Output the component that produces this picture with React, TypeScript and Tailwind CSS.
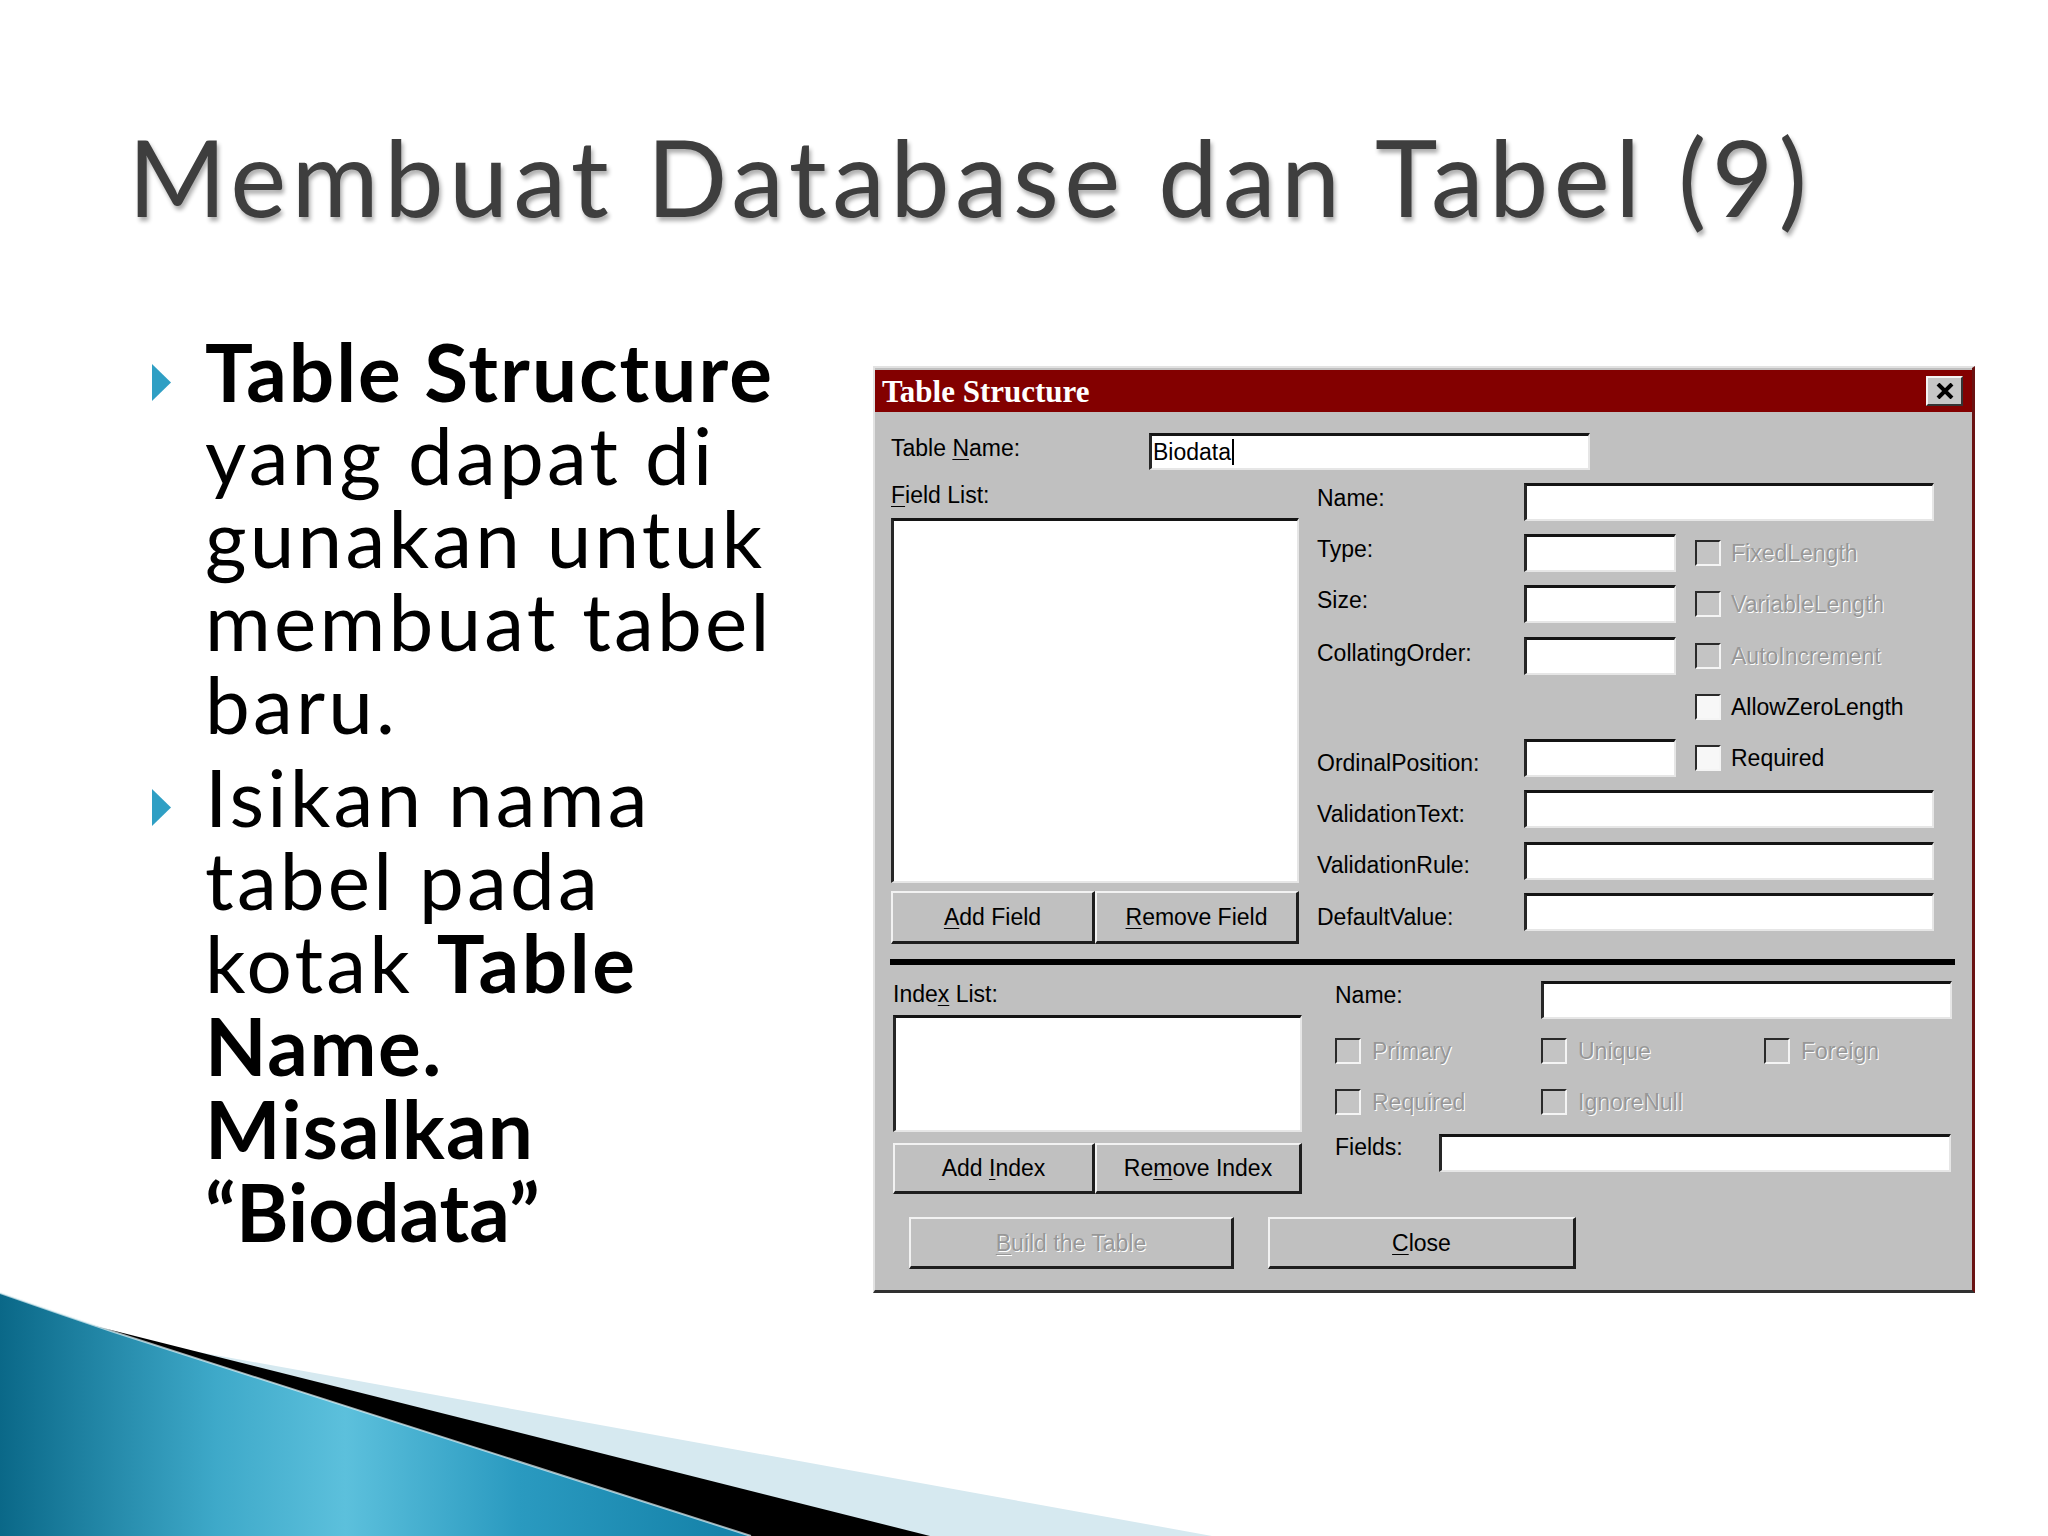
import React from "react";

const UI = "[font-family:'Liberation_Sans',Arial,sans-serif] text-[23px] leading-[26px] whitespace-nowrap";
const EN = "text-black";
const DIS = "text-[#979797] [text-shadow:1px_1px_0_#ffffff]";

function U({ children }: { children: React.ReactNode }) {
  return <span className="underline decoration-1 underline-offset-[3px]">{children}</span>;
}

function Sunken({ cls, children }: { cls: string; children?: React.ReactNode }) {
  return (
    <div
      className={
        "bg-white border-t-[3px] border-l-[3px] border-r-2 border-b-2 border-t-[#141414] border-l-[#262626] border-r-[#e6e6e6] border-b-[#e6e6e6] " +
        cls
      }
    >
      {children}
    </div>
  );
}

function Btn({ cls, children, disabled }: { cls: string; children: React.ReactNode; disabled?: boolean }) {
  return (
    <div
      className={
        "flex items-center justify-center bg-[#c0c0c0] border-t-2 border-l-2 border-t-[#f2f2f2] border-l-[#f2f2f2] border-r-[3px] border-b-[3px] border-r-[#1e1e1e] border-b-[#1e1e1e] " +
        UI +
        " " +
        (disabled ? DIS : EN) +
        " " +
        cls
      }
    >
      <span>{children}</span>
    </div>
  );
}

function Check({ label, disabled, gap }: { label: string; disabled?: boolean; gap: string }) {
  return (
    <div className={"flex items-center " + gap}>
      <div
        className={
          "w-[26px] h-[26px] shrink-0 border-t-2 border-l-2 border-r-2 border-b-2 border-t-[#2a2a2a] border-l-[#2a2a2a] border-r-[#f4f4f4] border-b-[#f4f4f4] " +
          (disabled ? "bg-[#c4c4c4]" : "bg-[#f7f7f7]")
        }
      />
      <span className={UI + " " + (disabled ? DIS : EN)}>{label}</span>
    </div>
  );
}

type Row = { label: string; input: "long" | "short" | "none"; check?: string; dis?: boolean; shift: string };

const upperRows: Row[] = [
  { label: "Name:", input: "long", shift: "-translate-y-[4px]" },
  { label: "Type:", input: "short", check: "FixedLength", dis: true, shift: "-translate-y-[4px]" },
  { label: "Size:", input: "short", check: "VariableLength", dis: true, shift: "-translate-y-[4px]" },
  { label: "CollatingOrder:", input: "short", check: "AutoIncrement", dis: true, shift: "-translate-y-[3px]" },
  { label: "", input: "none", check: "AllowZeroLength", shift: "" },
  { label: "OrdinalPosition:", input: "short", check: "Required", shift: "translate-y-[5px]" },
  { label: "ValidationText:", input: "long", shift: "translate-y-[5px]" },
  { label: "ValidationRule:", input: "long", shift: "translate-y-[4px]" },
  { label: "DefaultValue:", input: "long", shift: "translate-y-[5px]" },
];

function Dialog() {
  return (
    <div className="mt-[36.5px] w-[1102px] h-[927px] shrink-0 flex flex-col bg-[#c0c0c0] border-t-2 border-l-2 border-t-[#e2e2e2] border-l-[#e2e2e2] border-r-[3px] border-b-[3px] border-r-[#6a1212] border-b-[#303030]">
      {/* title bar */}
      <div className="mt-[2px] h-[42px] shrink-0 bg-[#830000] flex items-center justify-between pl-[7px] pr-[9px]">
        <span className="[font-family:'Liberation_Serif',serif] font-bold text-[31px] leading-[42px] text-white translate-y-[1px] whitespace-nowrap">
          Table Structure
        </span>
        <div className="w-[37px] h-[30px] flex items-center justify-center bg-[#c6c6c6] border-t-2 border-l-2 border-t-[#f4f4f4] border-l-[#f4f4f4] border-r-2 border-b-2 border-r-[#333] border-b-[#333]">
          <svg width="18" height="16" viewBox="0 0 18 16">
            <path d="M2 1 L16 15 M16 1 L2 15" stroke="#000" strokeWidth="4" />
          </svg>
        </div>
      </div>

      {/* body */}
      <div className="flex-1 flex flex-col pl-[16px]">
        {/* Table name row */}
        <div className="mt-[21px] h-[37px] flex items-center">
          <span className={UI + " " + EN + " w-[258px] -translate-y-[4px]"}>
            Table <U>N</U>ame:
          </span>
          <Sunken cls="w-[441px] h-[37px] flex items-center pl-[1px]">
            <span className={UI + " " + EN}>Biodata</span>
            <span className="w-[2px] h-[26px] bg-black ml-[1px]" />
          </Sunken>
        </div>

        {/* upper section */}
        <div className="h-[489px] flex">
          <div className="w-[408px] flex flex-col">
            <span className={UI + " " + EN + " mt-[12px]"}>
              <U>F</U>ield List:
            </span>
            <Sunken cls="mt-[10px] w-[408px] h-[365px]" />
            <div className="mt-[8px] flex h-[53px]">
              <Btn cls="w-[204px] h-[53px]">
                <U>A</U>dd Field
              </Btn>
              <Btn cls="w-[204px] h-[53px]">
                <U>R</U>emove Field
              </Btn>
            </div>
          </div>
          <div className="ml-[18px] mt-[6px] flex flex-col">
            {upperRows.map((r, i) => (
              <div key={i} className="h-[51.3px] flex items-center">
                <span className={UI + " " + EN + " w-[207px] " + r.shift}>{r.label}</span>
                {r.input === "long" && <Sunken cls="w-[410px] h-[38px]" />}
                {r.input === "short" && <Sunken cls="w-[152px] h-[38px]" />}
                {r.input === "none" && <div className="w-[152px]" />}
                {r.check && (
                  <div className="ml-[19px]">
                    <Check label={r.check} disabled={r.dis} gap="gap-[10px]" />
                  </div>
                )}
              </div>
            ))}
          </div>
        </div>

        {/* separator */}
        <div className="-ml-[1px] w-[1065px] h-[6px] bg-black shrink-0" />

        {/* lower section */}
        <div className="h-[229px] flex">
          <div className="pl-[2px] w-[411px] flex flex-col">
            <span className={UI + " " + EN + " mt-[16px]"}>
              Inde<U>x</U> List:
            </span>
            <Sunken cls="mt-[8px] w-[409px] h-[117px]" />
            <div className="mt-[11px] flex h-[51px]">
              <Btn cls="w-[202px] h-[51px]">
                Add <U>I</U>ndex
              </Btn>
              <Btn cls="w-[207px] h-[51px]">
                Re<U>m</U>ove Index
              </Btn>
            </div>
          </div>
          <div className="ml-[33px] mt-[9.5px] flex flex-col">
            <div className="h-[51px] flex items-center">
              <span className={UI + " " + EN + " w-[206px] -translate-y-[5px]"}>Name:</span>
              <Sunken cls="w-[411px] h-[38px]" />
            </div>
            <div className="h-[51px] flex items-center">
              <div className="w-[206px]">
                <Check label="Primary" disabled gap="gap-[11px]" />
              </div>
              <div className="w-[223px]">
                <Check label="Unique" disabled gap="gap-[11px]" />
              </div>
              <Check label="Foreign" disabled gap="gap-[11px]" />
            </div>
            <div className="h-[51px] flex items-center">
              <div className="w-[206px]">
                <Check label="Required" disabled gap="gap-[11px]" />
              </div>
              <Check label="IgnoreNull" disabled gap="gap-[11px]" />
            </div>
            <div className="h-[51px] flex items-center">
              <span className={UI + " " + EN + " w-[104px] -translate-y-[6px]"}>Fields:</span>
              <Sunken cls="w-[512px] h-[38px]" />
            </div>
          </div>
        </div>

        {/* bottom buttons */}
        <div className="mt-[23px] pl-[18px] flex">
          <Btn cls="w-[325px] h-[52px]" disabled>
            <U>B</U>uild the Table
          </Btn>
          <Btn cls="ml-[34px] w-[308px] h-[52px]">
            <U>C</U>lose
          </Btn>
        </div>
      </div>
    </div>
  );
}

function Bullet() {
  return (
    <svg className="shrink-0 mt-[34px]" width="19" height="37" viewBox="0 0 19 37">
      <polygon points="0,0 19,18.5 0,37" fill="#2f9fc4" />
    </svg>
  );
}

export default function App() {
  return (
    <div className="relative w-[2048px] h-[1536px] overflow-hidden bg-white">
      <h1 className="pt-[123px] pl-[128px] [font-family:Lato,sans-serif] font-normal text-[106px] leading-[106px] tracking-[5.4px] text-[#3e3e3e] [text-shadow:2px_4px_4px_rgba(0,0,0,0.32)] whitespace-nowrap">
        Membuat Database dan Tabel (9)
      </h1>

      <div className="mt-[100.5px] flex">
        <div className="w-[873px] shrink-0 pl-[152px] [font-family:Lato,sans-serif] text-[80px] leading-[83px] tracking-[3.2px] text-black">
          <div className="flex">
            <Bullet />
            <div className="pl-[34px] whitespace-nowrap">
              <div className="font-bold tracking-[2px]">Table Structure</div>
              <div>yang dapat di</div>
              <div>gunakan untuk</div>
              <div>membuat tabel</div>
              <div>baru.</div>
            </div>
          </div>
          <div className="mt-[10px] flex">
            <Bullet />
            <div className="pl-[34px] whitespace-nowrap">
              <div>Isikan nama</div>
              <div>tabel pada</div>
              <div>
                kotak <span className="font-bold tracking-[2.6px]">Table</span>
              </div>
              <div className="font-bold tracking-[1.6px]">Name.</div>
              <div className="font-bold tracking-[1.2px]">Misalkan</div>
              <div className="font-bold tracking-[0px]">“Biodata”</div>
            </div>
          </div>
        </div>
        <Dialog />
      </div>

      <svg className="absolute left-0 bottom-0" width="1250" height="260" viewBox="0 1276 1250 260">
        <defs>
          <linearGradient id="blueSw" gradientUnits="userSpaceOnUse" x1="0" y1="1450" x2="720" y2="1450">
            <stop offset="0" stopColor="#0a6888" />
            <stop offset="0.3" stopColor="#3ea9c9" />
            <stop offset="0.48" stopColor="#5cc0dc" />
            <stop offset="0.72" stopColor="#2a9ac0" />
            <stop offset="1" stopColor="#1683aa" />
          </linearGradient>
        </defs>
        <polygon points="0,1316 1212,1536 0,1536" fill="#d6e9f0" />
        <polygon points="0,1302 930,1536 0,1536" fill="#000000" />
        <path d="M0,1293 Q60,1314 111,1331 L751,1536 L0,1536 Z" fill="url(#blueSw)" />
        <path d="M0,1293 Q60,1314 111,1331 L751,1536" stroke="#e6f3f7" strokeWidth="2" fill="none" opacity="0.7" />
      </svg>
    </div>
  );
}
